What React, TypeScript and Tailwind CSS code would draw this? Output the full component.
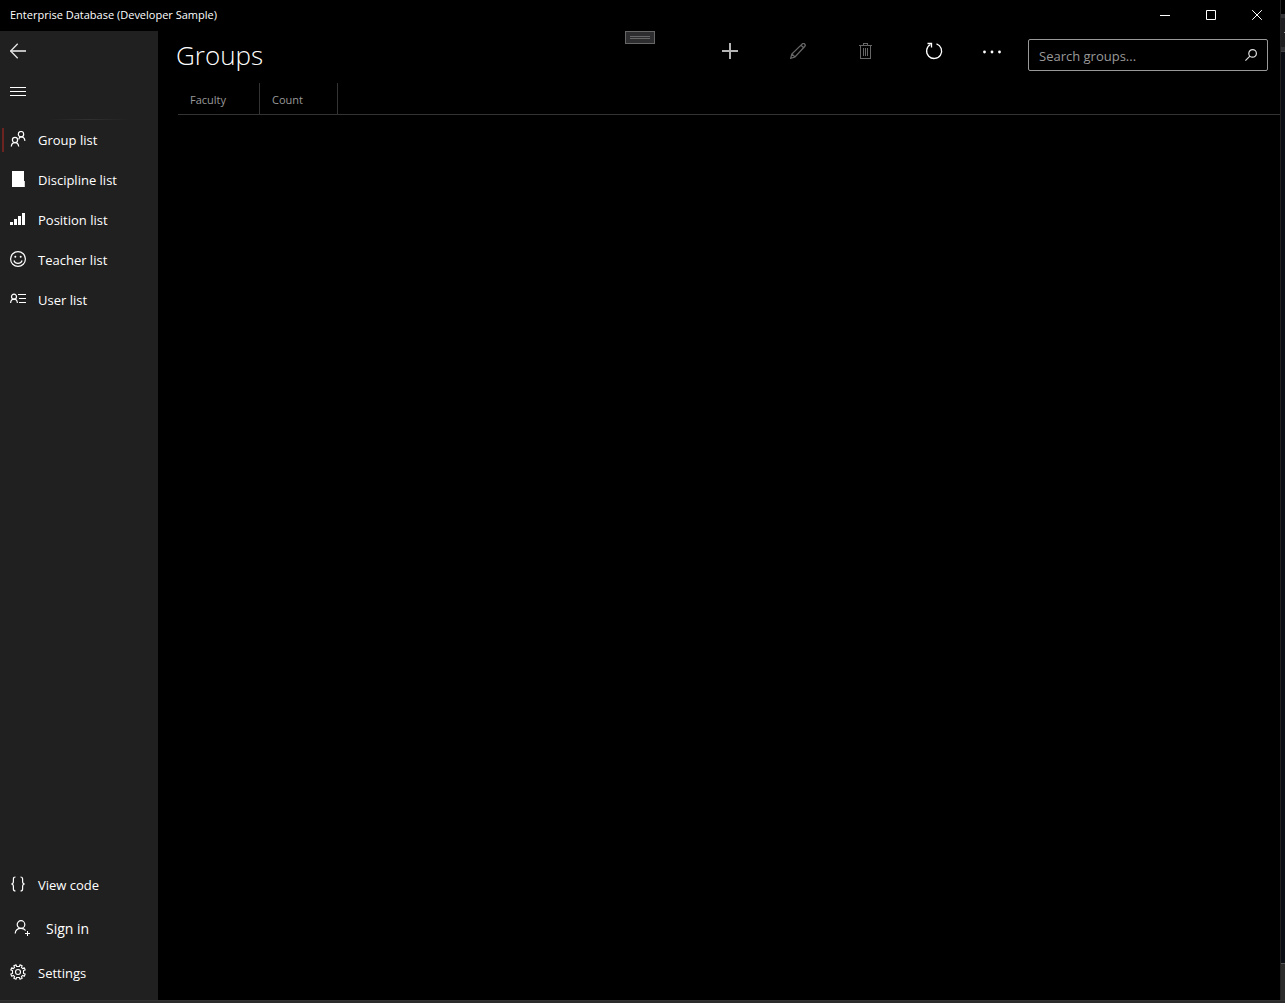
import type { ReactNode } from 'react';

const svg = {
  width: 16,
  height: 16,
  viewBox: '0 0 16 16',
  fill: 'none',
  stroke: 'currentColor',
  strokeWidth: 1,
  'aria-hidden': true,
} as const;

const BackIcon = () => (
  <svg {...svg}>
    <path d="M0.5 8H16" strokeWidth="1.6" />
    <path d="M7.7 0.8L0.7 8l7 7.2" strokeWidth="1.3" />
  </svg>
);

const MenuIcon = () => (
  <svg {...svg} shapeRendering="crispEdges">
    <path d="M0 4.5h16M0 8.5h16M0 12.5h16" />
  </svg>
);

const GroupIcon = () => (
  <svg {...svg} strokeWidth={1.2}>
    <circle cx="11" cy="3.2" r="2.7" />
    <circle cx="5" cy="9" r="2.6" />
    <path d="M8.7 8.3C9 7 9.8 5.9 11 5.9c2.2 0 3.7 1.5 3.900 4" />
    <path d="M1.300 15.500C1.500 13 3 11.600 5 11.600s3.400 1.400 3.700 3.900" />
  </svg>
);

const BookIcon = () => (
  <svg {...svg} stroke="none" fill="currentColor">
    <path d="M2 0h12v10h.8v6H2z" />
  </svg>
);

const SignalIcon = () => (
  <svg {...svg} stroke="none" fill="currentColor" shapeRendering="crispEdges">
    <path d="M0 11h3v3H0zM4 8h3v6H4zM8 5h3v9H8zM12 2h3v12h-3z" />
  </svg>
);

const SmileIcon = () => (
  <svg {...svg} strokeWidth={1.2}>
    <circle cx="8" cy="8" r="7.400" />
    <path d="M3.900 9.500c.7 1.900 2.200 2.900 4.100 2.900s3.400-1 4.100-2.900" />
    <circle cx="5.300" cy="5.700" r="1" fill="currentColor" stroke="none" />
    <circle cx="10.700" cy="5.700" r="1" fill="currentColor" stroke="none" />
  </svg>
);

const UserListIcon = () => (
  <svg {...svg}>
    <circle cx="4" cy="5.700" r="2.500" strokeWidth="1.200" />
    <path d="M.6 12C.8 9.600 2 8.200 4 8.200S7.200 9.600 7.400 12" strokeWidth="1.200" />
    <path d="M8 3.500h8M9 7.500h7M9 11.500h7" />
  </svg>
);

const BracesIcon = () => (
  <svg {...svg} strokeWidth={1.2}>
    <path d="M5.500 1C4 1 3.400 1.600 3.400 3v2.500C3.400 7 2.800 8 1.300 8c1.500 0 2.100 1 2.100 2.500V13c0 1.400.6 2 2.100 2" />
    <path d="M10.500 1c1.500 0 2.100.6 2.100 2v2.500c0 1.500.6 2.500 2.100 2.500-1.500 0-2.100 1-2.100 2.500V13c0 1.400-.6 2-2.100 2" />
  </svg>
);

const AddUserIcon = () => (
  <svg {...svg} strokeWidth={1.2}>
    <circle cx="7" cy="4.500" r="3.800" />
    <path d="M1.200 13.500C1.400 10.300 3.700 8.300 7 8.300c2 0 3.600.8 4.600 2.200" />
    <path d="M13.500 11v5M11 13.500h5" strokeWidth="1" />
  </svg>
);

const GearIcon = () => (
  <svg {...svg} strokeWidth={1.1}>
    <circle cx="8" cy="8" r="2.500" />
    <path
      strokeLinejoin="round"
      d="M6.600 2.500 6 .8 3.800 1.700 4.600 3.300 3.300 4.600 1.700 3.800.8 6 2.500 6.600V9.400L.8 10 1.700 12.200 3.300 11.400 4.600 12.700 3.800 14.300 6 15.200 6.600 13.500H9.400L10 15.200 12.200 14.300 11.400 12.700 12.700 11.400 14.300 12.200 15.200 10 13.500 9.400V6.600L15.200 6 14.300 3.800 12.700 4.600 11.400 3.300 12.200 1.700 10 .8 9.400 2.500z"
    />
  </svg>
);

const PlusIcon = () => (
  <svg {...svg} shapeRendering="crispEdges" strokeWidth={2} className="text-[#b4b4b4]">
    <path d="M0 8h16M8 0v16" />
  </svg>
);

const PencilIcon = () => (
  <svg {...svg} strokeWidth={1.3}>
    <path d="M.7 15.300 1.800 11 12.300.9c.8-.7 1.700-.5 2.300.1.700.7.900 1.700.1 2.500L5 14zM11 2.200l2.600 2.600M1.800 11 5 14" />
  </svg>
);

const TrashIcon = () => (
  <svg {...svg} shapeRendering="crispEdges">
    <path d="M1 2.500h13M5.500 2V.5h4V2M2.500 3v12.500h10V3M5.500 5v8M7.500 5v8M9.500 5v8" />
  </svg>
);

const RefreshIcon = () => (
  <svg {...svg} strokeWidth={1.3} overflow="visible">
    <path d="M10.500.9A7.500 7.500 0 1 1 4.400 1.500" />
    <path d="M1.500.5h4v4" />
  </svg>
);

const MoreIcon = () => (
  <svg width="20" height="16" viewBox="0 0 20 16" fill="currentColor" aria-hidden="true">
    <circle cx="2.500" cy="9" r="1.400" />
    <circle cx="10" cy="9" r="1.400" />
    <circle cx="17.500" cy="9" r="1.400" />
  </svg>
);

const SearchIcon = () => (
  <svg width="12" height="12" viewBox="0 0 12 12" fill="none" stroke="currentColor" strokeWidth="1.200" aria-hidden="true">
    <circle cx="7.600" cy="4.400" r="3.800" />
    <path d="M4.900 7.100.4 11.600" />
  </svg>
);

function CaptionButton({ label, path }: { label: string; path: string }) {
  return (
    <button type="button" aria-label={label} className="flex h-[30px] w-[46px] items-center justify-center text-white">
      <svg width="10" height="10" viewBox="0 0 10 10" fill="none" stroke="currentColor" aria-hidden="true">
        <path d={path} />
      </svg>
    </button>
  );
}

function NavItem({ icon, label, active = false }: { icon: ReactNode; label: string; active?: boolean }) {
  return (
    <li>
      <a
        href="#"
        aria-current={active ? 'page' : undefined}
        className="relative flex h-10 items-center gap-3 px-2.5 text-[13px] text-white"
      >
        {active && <span className="absolute left-0.5 h-6 w-0.5 bg-[#6b2420]" />}
        <span className="mb-0.5 shrink-0">{icon}</span>
        <span className="pt-0.5">{label}</span>
      </a>
    </li>
  );
}

function ToolButton({ label, disabled = false, children }: { label: string; disabled?: boolean; children: ReactNode }) {
  return (
    <button
      type="button"
      aria-label={label}
      disabled={disabled}
      className="flex h-10 w-[68px] items-center justify-center text-white disabled:text-[#666666]"
    >
      {children}
    </button>
  );
}

export default function App() {
  return (
    <div className="flex h-screen flex-col bg-[#2b2b2b] font-['Open_Sans','Noto_Sans',sans-serif] text-white">
      <div className="flex min-h-0 flex-1">
        <div className="relative flex min-w-0 flex-1 flex-col bg-black">
          <header className="flex h-[31px] shrink-0 items-center justify-between">
            <span className="px-2.5 text-[11px] font-medium">Enterprise Database (Developer Sample)</span>
            <div className="flex h-full">
              <CaptionButton label="Minimize" path="M0 5.500h10" />
              <CaptionButton label="Maximize" path="M.5.500h9v9h-9z" />
              <CaptionButton label="Close" path="M.2.200l9.600 9.600M9.800.200.200 9.800" />
            </div>
          </header>

          <div className="absolute top-[31px] left-1/2 flex h-[13px] w-[30px] -translate-x-1/2 flex-col items-center justify-center gap-px border border-[#666666] bg-[#2d2d30]">
            <span className="h-px w-5 bg-[#666666]" />
            <span className="h-px w-5 bg-[#666666]" />
          </div>

          <div className="flex min-h-0 flex-1">
            <nav className="flex w-[158px] shrink-0 flex-col bg-[#202020] pb-[7px]">
              <button type="button" aria-label="Back" className="flex h-10 items-center px-2.5 text-[#e6e6e6]">
                <BackIcon />
              </button>
              <button type="button" aria-label="Toggle navigation" className="flex h-10 items-center px-2.5">
                <MenuIcon />
              </button>
              <div className="mt-2 mr-7 ml-12 h-px bg-linear-to-r from-transparent via-[#303030] to-transparent" />
              <ul>
                <NavItem icon={<GroupIcon />} label="Group list" active />
                <NavItem icon={<BookIcon />} label="Discipline list" />
                <NavItem icon={<SignalIcon />} label="Position list" />
                <NavItem icon={<SmileIcon />} label="Teacher list" />
                <NavItem icon={<UserListIcon />} label="User list" />
              </ul>
              <ul className="mt-auto">
                <NavItem icon={<BracesIcon />} label="View code" />
                <li>
                  <a href="#" className="flex h-12 items-center gap-4 px-3.5 text-sm">
                    <span className="mb-0.5 shrink-0">
                      <AddUserIcon />
                    </span>
                    Sign in
                  </a>
                </li>
                <NavItem icon={<GearIcon />} label="Settings" />
              </ul>
            </nav>

            <main className="flex min-w-0 flex-1 flex-col">
              <div className="flex h-[52px] shrink-0 pr-3 pl-[18px]">
                <h1 className="flex-1 pt-1.5 text-[26px] leading-9 font-light">Groups</h1>
                <div className="flex">
                  <ToolButton label="Add">
                    <PlusIcon />
                  </ToolButton>
                  <ToolButton label="Edit" disabled>
                    <PencilIcon />
                  </ToolButton>
                  <ToolButton label="Delete" disabled>
                    <TrashIcon />
                  </ToolButton>
                  <ToolButton label="Refresh">
                    <RefreshIcon />
                  </ToolButton>
                  <button type="button" aria-label="More" className="flex h-10 w-12 items-center justify-center">
                    <MoreIcon />
                  </button>
                </div>
                <form role="search" className="mt-2 ml-3 flex h-8 w-60 items-center rounded-xs border border-[#999999]">
                  <input
                    type="text"
                    aria-label="Search groups"
                    placeholder="Search groups..."
                    className="min-w-0 flex-1 bg-transparent px-2.5 pt-1 text-[13px] outline-none placeholder:text-[#999999]"
                  />
                  <button type="button" aria-label="Search" className="px-2.5 text-[#e0e0e0]">
                    <SearchIcon />
                  </button>
                </form>
              </div>
              <div className="pl-5">
                <table className="w-full table-fixed border-separate border-spacing-0 text-left text-[11px] text-[#999999]">
                  <thead>
                    <tr className="h-8">
                      <th scope="col" className="w-[82px] border-r border-b border-[#333333] px-3 pt-1 font-normal">
                        Faculty
                      </th>
                      <th scope="col" className="w-[78px] border-r border-b border-[#333333] px-3 pt-1 font-normal">
                        Count
                      </th>
                      <td className="border-b border-[#333333]" />
                    </tr>
                  </thead>
                </table>
              </div>
            </main>
          </div>
        </div>

        <div className="flex w-[5px] shrink-0 flex-col border-l border-[#222222] bg-[#0a0e14]">
          <div className="h-3.5 bg-black" />
          <div className="flex h-[37px] flex-col items-end justify-center border-t-4 border-b-4 border-[#333337] bg-[#1e1e20]">
            <span className="h-px w-px bg-[#999999]" />
          </div>
          <div className="flex-1 border-t border-[#444444]" />
          <div className="h-[37px] border-t border-[#555555] bg-[#2b2b2b]" />
        </div>
      </div>
      <div className="h-[3px] shrink-0 border-t border-[#333333]" />
    </div>
  );
}
